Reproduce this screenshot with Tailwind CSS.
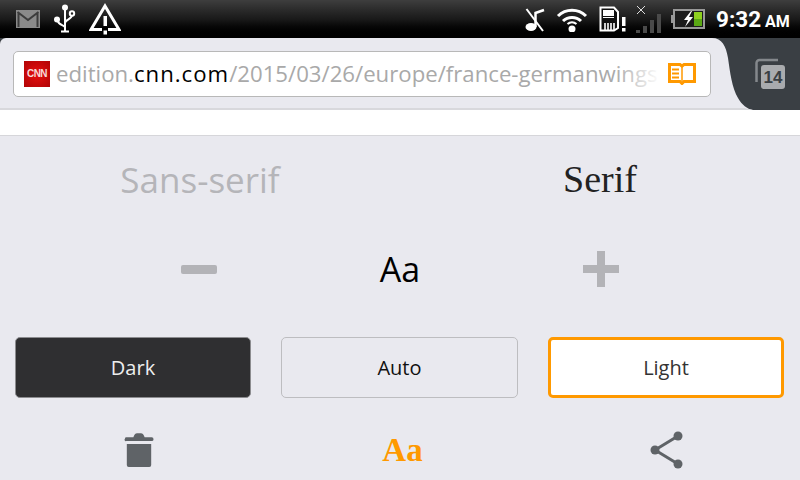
<!DOCTYPE html>
<html lang="en">
<head>
    <meta charset="UTF-8">
    <title>Reader settings</title>
    <script src="https://cdn.jsdelivr.net/npm/@tailwindcss/browser@4"></script>
</head>
<body class="m-0 bg-[#e9e9ef]">
<div class="w-[800px] h-[480px] overflow-hidden flex flex-col font-['Open_Sans',sans-serif]">

    <!-- status bar -->
    <div class="h-[38px] shrink-0 flex items-center bg-gradient-to-b from-[#3e3e3e] via-[#1a1a1a] to-black">
        <svg class="ml-[16px] w-[24px] h-[18px]" viewBox="0 0 24 18"><rect width="24" height="18" fill="#8a8a8a"/><path d="M1.500 2 L12 10 L22.500 2 M2.500 2V17 M21.500 2V17" fill="none" stroke="#3c3c3c" stroke-width="2"/></svg>
        <svg class="ml-[13px] w-[24px] h-[30px]" viewBox="0 0 24 30"><g fill="none" stroke="#fff" stroke-width="2"><path d="M12 4V27"/><path d="M5 17c0 4 7 4 7 6.500"/><path d="M19 11c0 4-7 5-7 8"/><circle cx="19" cy="9.500" r="2.200"/></g><circle cx="12" cy="3.500" r="3" fill="#fff"/><circle cx="4" cy="15.500" r="3" fill="#fff"/><rect x="8" y="26.500" width="8" height="2" fill="#fff"/></svg>
        <svg class="ml-[12px] w-[32px] h-[32px]" viewBox="0 0 32 32"><path d="M16 3 L30 26.500 H2 Z" fill="none" stroke="#fff" stroke-width="3"/><rect x="14.500" y="13" width="3.500" height="10" fill="#fff"/><rect x="13" y="24" width="6" height="7" fill="#000"/><rect x="14.500" y="27.500" width="3.500" height="4" fill="#fff"/></svg>
        <div class="flex-1"></div>
        <svg class="w-[20px] h-[26px]" viewBox="0 0 20 26"><ellipse cx="6" cy="21" rx="5.500" ry="4" fill="#fff"/><path d="M10.500 21V7 L19 4" fill="none" stroke="#fff" stroke-width="2.500"/><path d="M1.500 3 L18 25" stroke="#fff" stroke-width="2"/></svg>
        <svg class="ml-[11px] w-[32px] h-[26px]" viewBox="0 0 32 26"><g fill="none" stroke="#fff" stroke-width="3"><path d="M2 10a20 20 0 0 1 28 0"/><path d="M7 15a13 13 0 0 1 18 0"/></g><path d="M11.500 18a7 7 0 0 1 9 0" fill="none" stroke="#fff" stroke-width="2"/><circle cx="16" cy="23" r="3.500" fill="#fff"/></svg>
        <svg class="ml-[11px] w-[27px] h-[26px]" viewBox="0 0 27 26"><path d="M1.500 1.500H15L19 6V22L15 24.500H1.500Z" fill="#111" stroke="#fff" stroke-width="2"/><rect x="4" y="4" width="11" height="8" fill="#fff"/><rect x="4" y="10" width="11" height="1" fill="#111"/><path d="M6 17V24M9 17V24M12 17V24M15 17V24" stroke="#fff" stroke-width="1.600"/><rect x="23" y="11" width="3.500" height="9" fill="#fff"/><rect x="23" y="22" width="3.500" height="3.500" fill="#fff"/></svg>
        <svg class="ml-[10px] w-[26px] h-[28px]" viewBox="0 0 26 28"><path d="M1 1 L9 9 M9 1 L1 9" stroke="#ddd" stroke-width="1"/><rect x="0" y="25" width="4" height="3" fill="#4a4a4a"/><rect x="7" y="21" width="4" height="7" fill="#4a4a4a"/><rect x="14" y="15" width="4" height="13" fill="#4a4a4a"/><rect x="21" y="9" width="4" height="19" fill="#4a4a4a"/></svg>
        <svg class="ml-[9px] w-[34px] h-[20px]" viewBox="0 0 34 20"><rect x="3" y="1" width="30" height="18" fill="#1c1c1c" stroke="#999" stroke-width="2"/><rect x="0" y="6" width="3" height="8" fill="#999"/><rect x="23" y="3" width="8" height="14" fill="#5aa814"/><rect x="23" y="3" width="8" height="7" fill="#8ed020"/><path d="M20 2 L13 11 H17 L14 18 L22 8 H18 L21 2Z" fill="#fff"/></svg>
        <div class="ml-[11px] mr-[10px] w-[74px] text-white font-bold leading-none whitespace-nowrap font-['Roboto',sans-serif] text-[22.500px]">9:32<span class="ml-[4px] text-[16px]">AM</span></div>
    </div>

    <!-- toolbar -->
    <div class="h-[72px] shrink-0 flex bg-[#3a3f44]">
        <div class="w-[712px] shrink-0 bg-[#e9e9ef] border-b-2 border-[#d8d8dc] rounded-tl-[6px] pt-[13px] pl-[13px]">
            <div class="w-[698px] h-[46px] bg-white border border-[#b8b8b8] rounded-[5px] flex items-center pl-[10px] pr-[14px]">
                <div class="w-[26px] h-[26px] shrink-0 bg-radial from-[#e8100f] to-[#b00406] flex items-center justify-center text-[#f6dada] text-[10px] font-bold tracking-[-0.5px] leading-none font-['Liberation_Sans',sans-serif]">CNN</div>
                <div class="relative flex-1 ml-[6px] overflow-hidden whitespace-nowrap text-[22.200px] text-[#a9a9a9] leading-[30px]">edition.<span class="text-black tracking-[1px]">cnn.com</span>/2015/03/26/europe/france-germanwings<div class="absolute right-0 top-0 h-full w-[45px] bg-gradient-to-r from-white/0 to-white"></div></div>
                <svg class="ml-[8px] shrink-0 w-[28px] h-[22px]" viewBox="0 0 28 22"><path d="M1.500 1.500H12L14 3L16 1.500H26.500V18.500H16L14 20.500L12 18.500H1.500Z" fill="none" stroke="#ff9900" stroke-width="3"/><path d="M14 3V18" stroke="#ff9900" stroke-width="1.500"/><path d="M4 6.500H11M4 10.500H11M4 14.500H11" stroke="#ff9900" stroke-width="2"/></svg>
            </div>
        </div>
        <svg class="w-[43px] h-[72px] shrink-0" viewBox="0 0 43 72"><path d="M0 0C10 0 14 8 16 20C18 34 20 50 26 60C30 67 35 71 41 72H0Z" fill="#e9e9ef"/><path d="M0 70H33C35 71 38 71.500 41 72H0Z" fill="#d8d8dc"/></svg>
        <svg class="w-[32px] h-[32px] mt-[20px]" viewBox="0 0 32 32"><path d="M1.500 24V5a3 3 0 0 1 3-3H23" fill="none" stroke="#84888c" stroke-width="2.500"/><rect x="6" y="7" width="24" height="24" rx="3" fill="#a9abae"/><text x="18" y="25" text-anchor="middle" font-family="Liberation Sans" font-weight="700" font-size="17" fill="#3a3f44">14</text></svg>
    </div>

    <!-- page strip -->
    <div class="h-[26px] shrink-0 bg-white border-b border-[#d6d6da]"></div>

    <!-- reader panel -->
    <div class="flex-1 flex flex-col bg-[#e9e9ef]">
        <div class="grid grid-cols-2 h-[86px] mb-[2px] items-center">
            <div class="text-center text-[35px] text-[#b5b5b9] leading-none">Sans-serif</div>
            <div class="text-center text-[38px] text-[#222] leading-none font-['Liberation_Serif',serif]">Serif</div>
        </div>
        <div class="grid grid-cols-3 h-[90px] px-[98px] items-center justify-items-center">
            <div class="w-[36px] h-[9px] bg-[#b3b3b7] rounded-[2px]"></div>
            <div class="text-[34px] text-black leading-none">Aa</div>
            <svg class="w-[36px] h-[36px]" viewBox="0 0 36 36"><path d="M0 18H36M18 0V36" stroke="#b3b3b7" stroke-width="8"/></svg>
        </div>
        <div class="flex gap-[30px] pl-[15px] mt-[23px]">
            <button class="w-[236px] h-[61px] bg-[#2f2f31] border border-[#8c8c8f] rounded-[5px] text-[#eee] text-[20px]">Dark</button>
            <button class="w-[237px] h-[61px] bg-[#e9e9ef] border border-[#bdbdc0] rounded-[5px] text-[#111] text-[20px]">Auto</button>
            <button class="w-[236px] h-[61px] bg-white border-[3px] border-[#ff9900] rounded-[5px] text-[#333] text-[20px]">Light</button>
        </div>
        <div class="grid grid-cols-3 mt-[33px] justify-items-center items-center">
            <svg class="w-[30px] h-[38px] ml-[12px]" viewBox="0 0 32 38"><path d="M1 7a1.500 1.500 0 0 1 1.500-1.500H10C11 2 12 1 14 1H18C20 1 21 2 22 5.500H29.500a1.500 1.500 0 0 1 0 4H2.500A1.500 1.500 0 0 1 1 7Z" fill="#5f6367"/><path d="M3 12.500H29V35a2 2 0 0 1-2 2H5a2 2 0 0 1-2-2Z" fill="#5f6367"/></svg>
            <div class="text-[33px] font-bold text-[#ff9900] leading-none font-['Liberation_Serif',serif] ml-[5px]">Aa</div>
            <svg class="w-[34px] h-[38px] ml-[1px]" viewBox="0 0 34 38"><path d="M5 19L28 5M5 19L28 33" stroke="#5f6367" stroke-width="3"/><circle cx="28" cy="5" r="4.500" fill="#5f6367"/><circle cx="5" cy="19" r="4.500" fill="#5f6367"/><circle cx="28" cy="33" r="4.500" fill="#5f6367"/></svg>
        </div>
    </div>
</div>
</body>
</html>
